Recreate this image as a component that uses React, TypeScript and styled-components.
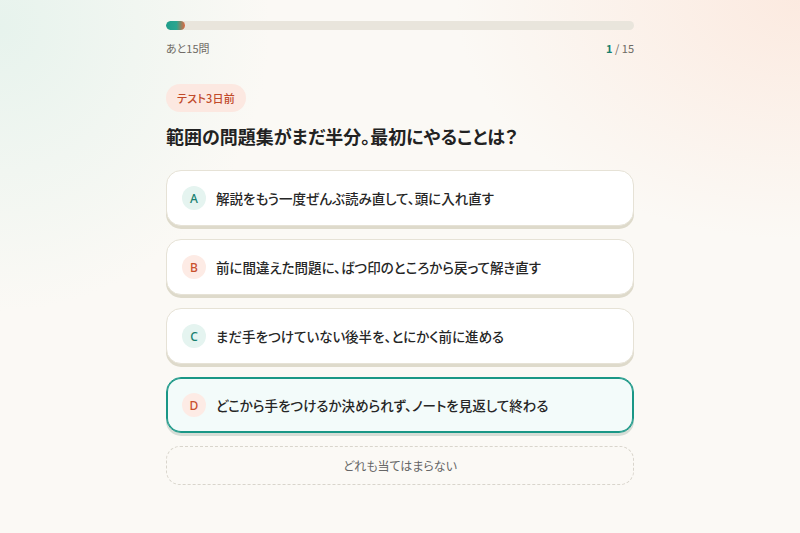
import styled, { createGlobalStyle } from "styled-components";

const GlobalStyle = createGlobalStyle`
  html, body {
    margin: 0;
    padding: 0;
  }
  body {
    font-family: "Noto Sans CJK JP", "Noto Sans", sans-serif;
    font-feature-settings: "palt";
    background: #fbf9f5;
    color: #222;
  }
`;

const options = [
  { letter: "A", text: "解説をもう一度ぜんぶ読み直して、頭に入れ直す", tone: "teal" },
  { letter: "B", text: "前に間違えた問題に、ばつ印のところから戻って解き直す", tone: "coral" },
  { letter: "C", text: "まだ手をつけていない後半を、とにかく前に進める", tone: "teal" },
  { letter: "D", text: "どこから手をつけるか決められず、ノートを見返して終わる", tone: "coral" },
];

const selected = "D";

export default function App() {
  const answered = 1;
  const total = 15;
  return (
    <Page>
      <GlobalStyle />
      <Column>
        <Track>
          <Fill style={{ width: `${Math.max((answered / total) * 100 * 0.6, 3.9)}%` }} />
        </Track>
        <Meta>
          <span>あと15問</span>
          <Count>
            <strong>{answered}</strong> / {total}
          </Count>
        </Meta>

        <Badge>テスト3日前</Badge>
        <Question>範囲の問題集がまだ半分。最初にやることは？</Question>

        <OptionList>
          {options.map((o) => (
            <OptionCard key={o.letter} $active={o.letter === selected}>
              <Letter $tone={o.tone}>{o.letter}</Letter>
              <OptionText>{o.text}</OptionText>
            </OptionCard>
          ))}
        </OptionList>

        <NoneButton>どれも当てはまらない</NoneButton>
      </Column>
    </Page>
  );
}

const Page = styled.div`
  min-height: 533px;
  box-sizing: border-box;
  padding-top: 21px;
  background:
    radial-gradient(ellipse 360px 380px at 0% 5%, rgba(214, 238, 230, 0.55), transparent 75%),
    radial-gradient(ellipse 460px 320px at 100% 0%, rgba(252, 224, 210, 0.6), transparent 75%),
    #fbf9f5;
`;

const Column = styled.div`
  width: 468px;
  margin: 0 auto;
  display: flex;
  flex-direction: column;
`;

const Track = styled.div`
  height: 9px;
  border-radius: 999px;
  background: #e9e5dc;
  overflow: hidden;
`;

const Fill = styled.div`
  height: 100%;
  border-radius: 999px;
  background: linear-gradient(90deg, #1e9e8c 0%, #2aa58f 55%, #e0673f 100%);
`;

const Meta = styled.div`
  margin-top: 10px;
  display: flex;
  justify-content: space-between;
  font-size: 11px;
  line-height: 16px;
  color: #6e6a64;
`;

const Count = styled.span`
  strong {
    color: #17806f;
    font-weight: 700;
  }
`;

const Badge = styled.div`
  align-self: flex-start;
  margin-top: 28px;
  height: 28px;
  padding: 0 11px;
  border-radius: 14px;
  background: #fce8e1;
  color: #c14a2a;
  font-size: 11px;
  font-weight: 500;
  letter-spacing: 0.02em;
  display: flex;
  align-items: center;
`;

const Question = styled.h1`
  margin: 12px 0 0;
  font-size: 18px;
  line-height: 24px;
  font-weight: 700;
  color: #222;
`;

const OptionList = styled.div`
  margin-top: 22px;
  display: flex;
  flex-direction: column;
  gap: 13px;
`;

const OptionCard = styled.div<{ $active?: boolean }>`
  height: 56px;
  box-sizing: border-box;
  display: flex;
  align-items: center;
  gap: 10px;
  padding: 0 15px;
  border-radius: 15px;
  border: 1px solid ${(p) => (p.$active ? "#1a9786" : "#e6e2d6")};
  background: ${(p) => (p.$active ? "#f3fbfa" : "#ffffff")};
  box-shadow: ${(p) =>
    p.$active
      ? "inset 0 0 0 1px #1a9786, 0 3px 0 #d6ddd6"
      : "0 3px 0 #dedacb"};
`;

const Letter = styled.span<{ $tone: string }>`
  width: 24px;
  height: 24px;
  border-radius: 50%;
  flex-shrink: 0;
  display: flex;
  align-items: center;
  justify-content: center;
  font-family: "Noto Sans", sans-serif;
  font-size: 12px;
  font-weight: 500;
  background: ${(p) => (p.$tone === "teal" ? "#e5f4f0" : "#fdebe5")};
  color: ${(p) => (p.$tone === "teal" ? "#17806f" : "#c9502d")};
`;

const OptionText = styled.span`
  font-size: 13.5px;
  font-weight: 500;
  color: #262626;
`;

const NoneButton = styled.div`
  margin-top: 13px;
  height: 39px;
  box-sizing: border-box;
  border: 1px dashed #d9d5cc;
  border-radius: 14px;
  display: flex;
  align-items: center;
  justify-content: center;
  font-size: 12px;
  color: #666;
`;
